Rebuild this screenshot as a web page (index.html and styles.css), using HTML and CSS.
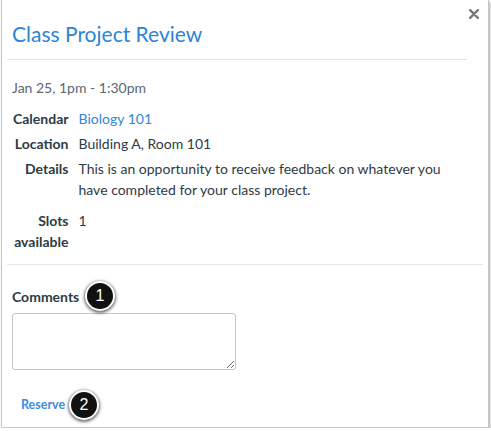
FILE: index.html
```html
<!DOCTYPE html>
<html>
<head>
<meta charset="utf-8">
<link rel="stylesheet" href="styles.css">
</head>
<body>
<div class="dialog">
  <div class="header">
    <h2 class="title">Class Project Review</h2>
    <span class="close" aria-label="Close"><svg class="close-icon" width="10" height="10" viewBox="0 0 10 10"><path d="M1.2 1.2 L8.8 8.8 M8.8 1.2 L1.2 8.8" stroke="#7a7a7a" stroke-width="2.4" stroke-linecap="round"/></svg></span>
  </div>
  <div class="content">
    <div class="date">Jan 25, 1pm - 1:30pm</div>
    <table class="info">
      <tr><th>Calendar</th><td><a class="link">Biology 101</a></td></tr>
      <tr><th>Location</th><td>Building A, Room 101</td></tr>
      <tr><th>Details</th><td><p class="details">This is an opportunity to receive feedback on whatever you have completed for your class project.</p></td></tr>
      <tr><th>Slots<br>available</th><td>1</td></tr>
    </table>
  </div>
  <div class="form">
    <div class="label-wrap">
      <label class="label">Comments</label>
      <span class="badge badge-1">1</span>
    </div>
    <textarea class="comments"></textarea>
    <div class="reserve-wrap">
      <a class="reserve">Reserve</a>
      <span class="badge badge-2">2</span>
    </div>
  </div>
</div>
</body>
</html>
```
FILE: styles.css
```css
html, body {
  margin: 0;
  padding: 0;
  background: #ffffff;
}
body {
  font-family: Lato, "Open Sans", "Liberation Sans", sans-serif;
  color: #2d3b45;
  font-size: 14px;
}
.dialog {
  box-sizing: border-box;
  margin: 0 2px 0 1px;
  width: 488px;
  height: 428px;
  border: 1px solid #c8c8c8;
  border-top: none;
  box-shadow: 1px 2px 2px rgba(0,0,0,0.35);
  padding: 0 5px;
  position: relative;
  background: #fff;
}
.header {
  display: flex;
  align-items: flex-start;
}
.title {
  flex: 1;
  margin: 0;
  padding: 20px 0 11px 5px;
  font-size: 21px;
  line-height: 28px;
  font-weight: 400;
  color: #2c84d8;
  border-bottom: 1px solid #e4e4e4;
}
.close {
  box-sizing: border-box;
  width: 16px;
  flex: none;
  display: flex;
  justify-content: center;
  padding-top: 9px;
  padding-right: 2px;
}
.close-icon {
  display: block;
  flex: none;
}
.content {
  padding: 0 5px;
  border-bottom: 1px solid #e6e6e6;
  padding-bottom: 10px;
}
.date {
  margin-top: 18px;
  line-height: 20px;
  color: #5b6770;
}
.info {
  margin-top: 8px;
  border-collapse: collapse;
}
.info th, .info td {
  padding: 2px 0;
  line-height: 21px;
  vertical-align: top;
}
.info th {
  text-align: right;
  font-weight: 700;
  padding-left: 1px;
  padding-right: 10px;
  color: #2d3b45;
}
.info td {
  color: #2d3b45;
  padding-right: 30px;
}
.details {
  margin: 0 0 6px 0;
}
.link {
  color: #2d86da;
}
.form {
  padding: 0 5px;
}
.label-wrap {
  position: relative;
  margin-top: 22px;
  height: 20px;
  line-height: 20px;
}
.label {
  font-weight: 700;
  color: #2d3b45;
}
.comments {
  display: block;
  box-sizing: border-box;
  margin-top: 6px;
  width: 224px;
  height: 57px;
  border: 1px solid #c5c5c5;
  border-radius: 3px;
  font-family: inherit;
}
.reserve-wrap {
  position: relative;
  margin-top: 24px;
  padding-left: 9px;
  line-height: 20px;
  height: 20px;
}
.reserve {
  font-size: 12.5px;
  font-weight: 700;
  color: #3a8de0;
}
.badge {
  position: absolute;
  box-sizing: border-box;
  width: 30px;
  height: 30px;
  border-radius: 50%;
  background: #111;
  border: 2px solid #fff;
  box-shadow: 0 1px 3px 1px rgba(0,0,0,0.55);
  color: #fff;
  font-family: "Liberation Sans", Arial, sans-serif;
  font-size: 16px;
  line-height: 26px;
  text-align: center;
}
.badge-1 {
  left: 73px;
  top: -6px;
}
.badge-2 {
  left: 57px;
  top: -4px;
}
```
